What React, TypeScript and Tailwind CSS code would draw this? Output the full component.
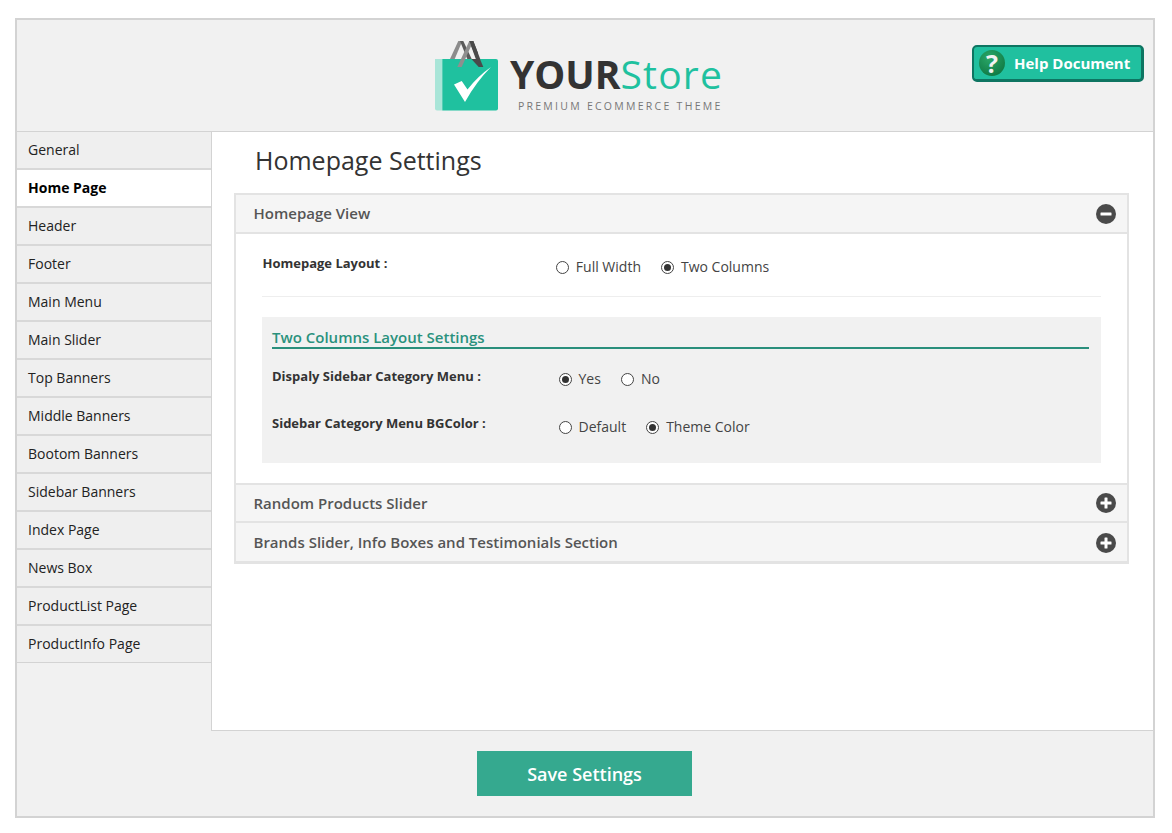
import {FC} from 'react';

const MENU = ['General', 'Home Page', 'Header', 'Footer', 'Main Menu', 'Main Slider', 'Top Banners', 'Middle Banners', 'Bootom Banners', 'Sidebar Banners', 'Index Page', 'News Box', 'ProductList Page', 'ProductInfo Page'];

const Radio: FC<{label: string; checked?: boolean}> = ({label, checked}) => (
  <label className="flex items-center gap-[7px] text-[14px] leading-5 text-[#444]">
    <span className="flex h-[13px] w-[13px] items-center justify-center rounded-full border border-[#444] bg-white">
      {checked && <span className="h-[7px] w-[7px] rounded-full bg-[#333]" />}
    </span>
    {label}
  </label>
);

const ToggleIcon: FC<{open?: boolean}> = ({open}) => (
  <svg width="20" height="20" viewBox="0 0 20 20">
    <circle cx="10" cy="10" r="10" fill="#4a4a4a" />
    <rect x="4.5" y="8.5" width="11" height="3" rx="0.5" fill="#fff" />
    {!open && <rect x="8.5" y="4.5" width="3" height="11" rx="0.5" fill="#fff" />}
  </svg>
);

const Logo: FC = () => (
  <div className="flex items-start">
    <svg width="64" height="72" viewBox="0 0 64 72">
      <path d="M16 19 L24.3 1 L28.3 1 L20.7 19 Z" fill="#8c8c8c" />
      <path d="M26 1 L29.3 1 L37.7 19 L33.3 19 Z" fill="#5a5a5a" />
      <path d="M35.3 1 L39.3 1 L49.3 27 L44.7 27 Z" fill="#4a4a4a" />
      <path d="M1 19 H8.3 V70.5 H3 a2 2 0 0 1 -2 -2 Z" fill="#a9e5d8" />
      <path d="M8.3 19 H62 a2 2 0 0 1 2 2 V68.5 a2 2 0 0 1 -2 2 H8.3 Z" fill="#1fc19f" />
      <path d="M23.3 27 L27.7 27 L39.3 1 L35.3 1 Z" fill="#8f8f8f" />
      <path d="M35.3 1 L39.3 1 L44 13 L41 15 Z" fill="#4a4a4a" />
      <path d="M37.4 19 L46 19 L49.3 27 L44.7 27 Z" fill="#4a4a4a" />
      <path d="M20 44.5 L27.7 41 L33.5 49.5 Q44 36 57 27 Q42 42 31 62 Z" fill="#fff" />
    </svg>
    <div className="ml-[12px] mt-[14px] flex flex-col">
      <div className="flex h-[38px] items-center text-[39px] leading-none">
        <span className="font-bold text-[#333]">YOUR</span>
        <span className="tracking-[1.2px] text-[#1fc19f]">Store</span>
      </div>
      <div className="ml-[8px] mt-[6px] h-[16px] whitespace-nowrap text-[10.5px] leading-4 tracking-[2.27px] text-[#777]">PREMIUM ECOMMERCE THEME</div>
    </div>
  </div>
);

const HelpIcon: FC = () => (
  <span className="flex h-[26px] w-[26px] items-center justify-center rounded-full bg-[radial-gradient(circle_at_40%_30%,#2aa868,#0a6e3c)] text-[25px] font-bold leading-none text-[#f2f2f2]">?</span>
);

export default function App() {
  return (
    <div className="min-h-screen bg-white pl-[15px] pt-[18px] [font-family:'Open_Sans',sans-serif]">
      <div className="flex h-[800px] w-[1140px] flex-col border-2 border-[#d3d3d3] bg-[#f1f1f1]">
        {/* Top bar */}
        <div className="relative flex h-[111px] shrink-0 justify-center pl-[1px] pt-[20px]">
          <div className="mr-[14px]"><Logo /></div>
          <a className="absolute left-[955px] top-[25px] flex h-[37px] w-[172px] items-center gap-[9px] rounded-[5px] border-2 border-b-[3px] border-r-[3px] border-[#0e7562] bg-[#20c09f] pl-[5px] text-[15px] font-bold text-white" href="#">
            <HelpIcon />
            Help Document
          </a>
        </div>

        <div className="flex h-[600px] shrink-0">
          {/* Sidebar */}
          <div className="w-[194px] shrink-0 border-t border-[#d3d3d3]">
            {MENU.map((item, i) => (
              <div
                className={`flex items-center pl-[11px] text-[14px] ${i === 1 ? 'h-[38px] border-b-2 border-[#d8d8d8] bg-white pb-[2px] font-bold text-black' : i === MENU.length - 1 ? 'h-[37px] border-b border-[#d3d3d3] bg-[#efefef] pb-[1px] text-[#222]' : 'h-[38px] border-b-2 border-[#d8d8d8] bg-[#efefef] pb-[2px] text-[#222]'}`}
                key={item}
              >
                {item}
              </div>
            ))}
          </div>

          {/* Content */}
          <div className="flex-1 border-b border-l border-t border-[#d3d3d3] bg-white px-[22px]">
            <h1 className="ml-[21px] mt-[11px] text-[25px] leading-[34px] text-[#333]">Homepage Settings</h1>

            <div className="mt-[16px] w-[895px]">
              <div className="border-2 border-b-0 border-[#e3e3e3]">
                <div className="flex h-[39px] items-center justify-between border-b-2 border-[#e3e3e3] bg-[#f5f5f5] pl-[17.5px] pr-[11px]">
                  <span className="text-[15px] font-semibold text-[#555]">Homepage View</span>
                  <ToggleIcon open />
                </div>

                <div className="h-[249px] bg-white px-[26px]">
                  <div className="flex h-[63px] border-b border-[#eee]">
                    <span className="ml-[0.5px] mt-[19px] text-[13px] font-bold leading-5 text-[#333]">Homepage Layout :</span>
                    <div className="ml-[168.5px] mt-[23px] flex h-5 gap-[20px]">
                      <Radio label="Full Width" />
                      <Radio label="Two Columns" checked />
                    </div>
                  </div>

                  <div className="mt-[20px] h-[146px] bg-[#f1f1f1] px-[10px] pt-[10px]">
                    <div className="mr-[2px] border-b-2 border-[#2a8f7c] text-[15px] font-semibold leading-[20px] text-[#2a917d]">Two Columns Layout Settings</div>
                    <div className="mt-[17px] flex">
                      <span className="w-[286.5px] text-[13px] font-bold leading-5 text-[#333]">Dispaly Sidebar Category Menu :</span>
                      <div className="mt-[3px] flex h-5 gap-[20px]">
                        <Radio label="Yes" checked />
                        <Radio label="No" />
                      </div>
                    </div>
                    <div className="mt-[24px] flex">
                      <span className="w-[286.5px] text-[13px] font-bold leading-5 text-[#333]">Sidebar Category Menu BGColor :</span>
                      <div className="mt-[4px] flex h-5 gap-[20px]">
                        <Radio label="Default" />
                        <Radio label="Theme Color" checked />
                      </div>
                    </div>
                  </div>
                </div>
              </div>

              <div className="flex h-[40px] items-center justify-between border-2 border-[#e3e3e3] bg-[#f5f5f5] pl-[17.5px] pr-[11px]">
                <span className="text-[15px] font-semibold text-[#555]">Random Products Slider</span>
                <ToggleIcon />
              </div>
              <div className="flex h-[41px] items-center justify-between border-x-2 border-b-[3px] border-[#e3e3e3] bg-[#f5f5f5] pl-[17.5px] pr-[11px] pt-[1px]">
                <span className="text-[15px] font-semibold text-[#555]">Brands Slider, Info Boxes and Testimonials Section</span>
                <ToggleIcon />
              </div>
            </div>
          </div>
        </div>

        {/* Save */}
        <div className="flex justify-center pr-[1px] pt-[20px]">
          <button className="h-[45px] w-[215px] bg-[#35a98f] pt-[2px] text-[18px] font-semibold text-white" type="button">Save Settings</button>
        </div>
      </div>
    </div>
  );
}
